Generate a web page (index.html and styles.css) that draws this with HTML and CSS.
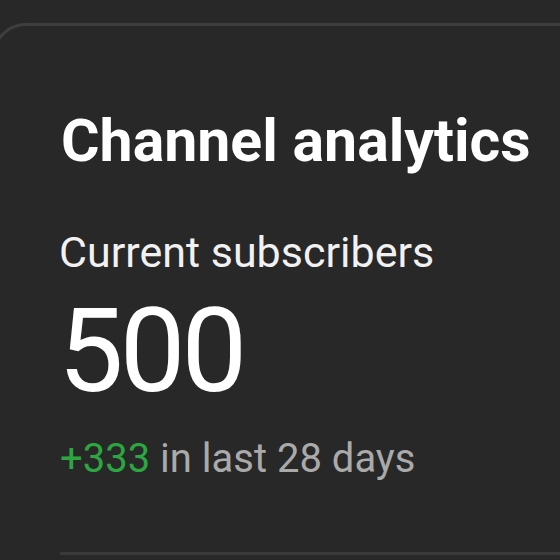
FILE: index.html
```html
<!DOCTYPE html>
<html lang="en">
<head>
  <meta charset="UTF-8">
  <meta name="viewport" content="width=device-width, initial-scale=1.0">
  <title>Channel analytics</title>
  <link rel="stylesheet" href="styles.css">
</head>
<body>
  <div class="page">
    <div class="card">
      <h2 class="card-title">Channel analytics</h2>
      <div class="metric-label">Current subscribers</div>
      <div class="metric-value">500</div>
      <div class="metric-change"><span class="up">+333</span> in last 28 days</div>
      <div class="divider"></div>
    </div>
  </div>
</body>
</html>
```

FILE: styles.css
```css
/* Carta analytics scura, stile studio */
body {
  margin: 0;
  padding: 0;
  background-color: #282828;
  font-family: Roboto, "Noto Sans", Arial, sans-serif;
  overflow: hidden;
}

.page {
  padding-top: 23px;
}

.card {
  margin-left: -8px;
  width: 640px;
  border: 3px solid #3e3e3e;
  border-radius: 34px;
  padding: 85px 0 0 66px;
  height: 700px;
}

.card-title {
  margin: 0;
  font-size: 59px;
  font-weight: 700;
  line-height: 59px;
  color: #ffffff;
}

.metric-label {
  margin-top: 61px;
  margin-left: -2px;
  font-size: 43px;
  line-height: 43px;
  color: #f1f1f1;
}

.metric-value {
  margin-top: 19px;
  margin-left: -3px;
  font-size: 117px;
  line-height: 117px;
  letter-spacing: -4px;
  color: #ffffff;
}

.metric-change {
  margin-top: 29px;
  margin-left: -1px;
  font-size: 40px;
  line-height: 40px;
  color: #aaaaaa;
}

.up {
  color: #2ba640;
}

.divider {
  margin-top: 73px;
  margin-left: -1px;
  height: 3px;
  background-color: #3a3a3a;
}
```
